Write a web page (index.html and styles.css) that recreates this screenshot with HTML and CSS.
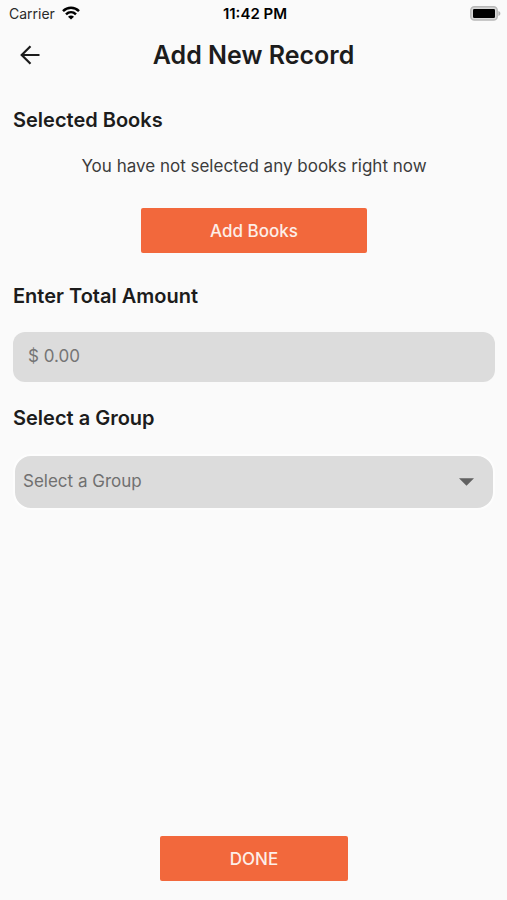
FILE: index.html
```html
<!DOCTYPE html>
<html lang="en">
<head>
<meta charset="utf-8">
<meta name="viewport" content="width=device-width, initial-scale=1">
<title>Add New Record</title>
<link rel="stylesheet" href="styles.css">
</head>
<body>
<div class="screen">
  <div class="status">
    <div class="carrier">
      <span>Carrier</span>
      <svg class="wifi" viewBox="0 0 18 14" aria-hidden="true">
        <path d="M1 5.2C5.6.7 12.4.7 17 5.2M4 8.3c2.9-2.8 7.1-2.8 10 0" fill="none" stroke="#000" stroke-width="2.5"/>
        <path d="M9 13.6 6 10.7c1.7-1.6 4.3-1.6 6 0z"/>
      </svg>
    </div>
    <span class="time">11:42 PM</span>
    <svg class="battery" viewBox="0 0 31 15" aria-hidden="true">
      <rect x=".8" y=".8" width="26.4" height="13.2" rx="3.6" fill="#d8d8d8" stroke="#b8b8b8" stroke-width="1.5"/>
      <rect x="3" y="3" width="22" height="9" rx="1.2"/>
      <path d="M28.4 5v5c2.6-1 2.6-4 0-5z" fill="#b0b0b0"/>
    </svg>
  </div>
  <header class="bar">
    <button class="back" type="button" aria-label="Back">
      <svg viewBox="0 0 20 20" aria-hidden="true"><path d="M19.5 10H1.8M10.5 1.2 1.7 10l8.8 8.8" fill="none" stroke="#1c1c1c" stroke-width="2.2"/></svg>
    </button>
    <h1>Add New Record</h1>
  </header>
  <form class="form">
    <section class="books">
      <h2>Selected Books</h2>
      <p>You have not selected any books right now</p>
      <button class="action add" type="button">Add Books</button>
    </section>
    <div class="field">
      <label for="amount">Enter Total Amount</label>
      <input id="amount" class="control" type="text" inputmode="decimal" placeholder="$ 0.00">
    </div>
    <div class="field">
      <label for="group">Select a Group</label>
      <div class="picker">
        <select id="group" class="control">
          <option>Select a Group</option>
        </select>
        <svg class="caret" viewBox="0 0 16 8" aria-hidden="true"><path d="M0 0h16L8 8z" fill="#616161"/></svg>
      </div>
    </div>
    <button class="action done" type="submit">DONE</button>
  </form>
</div>
</body>
</html>
```
FILE: styles.css
```css
* {
  box-sizing: border-box;
}

body {
  margin: 0;
  background: #fafafa;
  color: #1c1c1c;
  font-family: Inter, "Liberation Sans", sans-serif;
}

h1,
h2,
p {
  margin: 0;
}

button,
input,
select {
  font: inherit;
}

.screen {
  display: flex;
  flex-direction: column;
  min-height: 100vh;
}

.status {
  display: grid;
  grid-template-columns: 1fr auto 1fr;
  align-items: center;
  height: 26px;
  padding: 0 6px 0 9px;
  color: #000;
  font-size: 14px;
}

.carrier {
  display: flex;
  align-items: center;
  gap: 7px;
  color: #2a2a2a;
}

.wifi {
  width: 18px;
  height: 14px;
}

.time {
  font-size: 15px;
  font-weight: 600;
}

.battery {
  justify-self: end;
  width: 31px;
  height: 15px;
}

.bar {
  display: grid;
  grid-template-columns: 48px 1fr 48px;
  align-items: center;
  height: 58px;
  padding: 0 6px;
}

.back {
  display: grid;
  place-items: center;
  height: 48px;
  padding: 0;
  border: 0;
  background: none;
}

.back svg {
  width: 20px;
  height: 20px;
}

h1 {
  font-size: 25px;
  font-weight: 600;
  line-height: 32px;
  text-align: center;
}

.form {
  display: flex;
  flex: 1;
  flex-direction: column;
  gap: 24px;
  padding: 24px 12px 19px 13px;
}

.books {
  display: flex;
  flex-direction: column;
}

h2,
label {
  font-size: 20px;
  font-weight: 600;
  line-height: 24px;
}

.books p {
  margin: 22px 0 30px;
  color: #3c3c3c;
  font-size: 17px;
  line-height: 24px;
  text-align: center;
}

.action {
  align-self: center;
  height: 45px;
  border: 0;
  border-radius: 2px;
  background: #f2683c;
  color: #fdeee8;
  font-size: 17px;
  font-weight: 500;
}

.add {
  width: 47%;
}

.done {
  width: 39%;
  margin-top: auto;
}

.books + .field {
  margin-top: 7px;
}

.field {
  display: flex;
  flex-direction: column;
  gap: 24px;
}

.control {
  width: 100%;
  border: 0;
  background: #dcdcdc;
  color: #707070;
  font-size: 17px;
}

input.control {
  height: 50px;
  padding: 0 15px 2px;
  border-radius: 12px;
}

input::placeholder {
  color: #757575;
}

.picker {
  position: relative;
}

select.control {
  height: 56px;
  padding: 0 40px 2px 8px;
  border: 2px solid #fdfdfd;
  border-radius: 18px;
  appearance: none;
}

.caret {
  position: absolute;
  top: 50%;
  right: 21px;
  width: 15px;
  height: 8px;
  margin-top: -4px;
  pointer-events: none;
}
```
